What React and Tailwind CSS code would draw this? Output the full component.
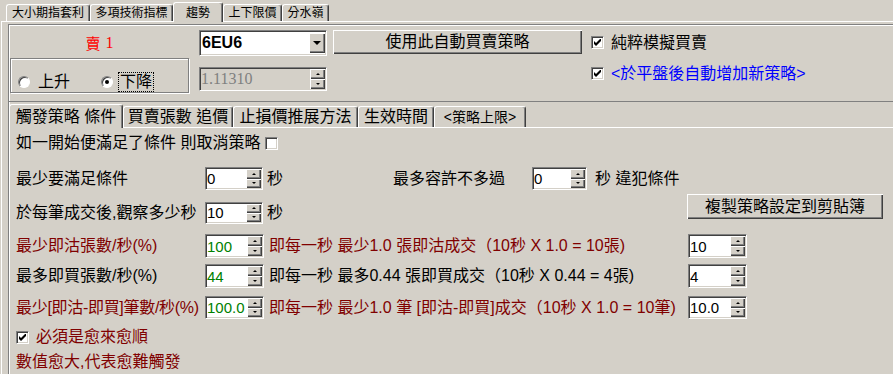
const raised = "bg-[#d4d0c8] shadow-[inset_1px_1px_0_#ffffff,inset_-1px_-1px_0_#404040,inset_-2px_-2px_0_#808080]";
const sunken = "border border-[#808080] border-b-white border-r-white shadow-[inset_1px_1px_0_#404040,inset_-1px_-1px_0_#d4d0c8]";

function Check({ checked }) {
  return (
    <span className={`flex h-[13px] w-[13px] shrink-0 items-center justify-center bg-white ${sunken}`}>
      {checked && (
        <svg width="7" height="7" viewBox="0 0 7 7">
          <path d="M0 2L2 4L6 0L7 0L7 2L2 7L0 5Z" fill="black" />
        </svg>
      )}
    </span>
  );
}

function Radio({ on }) {
  return (
    <span className="flex h-[12px] w-[12px] shrink-0 items-center justify-center rounded-full border border-[#808080] border-b-white border-r-white bg-white shadow-[inset_1px_1px_0_#404040]">
      {on && <span className="h-[4px] w-[4px] rounded-full bg-black" />}
    </span>
  );
}

function SpinButtons() {
  return (
    <div className="flex w-[16px] shrink-0 flex-col py-[1px] pr-[1px]">
      <div className={`flex flex-1 items-center justify-center ${raised}`}>
        <span className="h-0 w-0 border-x-[2px] border-b-[2px] border-x-transparent border-b-black" />
      </div>
      <div className={`flex flex-1 items-center justify-center ${raised}`}>
        <span className="h-0 w-0 border-x-[2px] border-t-[2px] border-x-transparent border-t-black" />
      </div>
    </div>
  );
}

function Spin({ value, w, h, color = "text-black", disabled }) {
  return (
    <div className={`flex shrink-0 ${w} ${h} ${sunken} ${disabled ? "bg-[#d4d0c8]" : "bg-white"}`}>
      <div
        className={`flex flex-1 items-center pl-[1px] ${
          disabled ? "font-['Liberation_Serif',serif] text-[16px] text-[#808080]" : `text-[15px] ${color}`
        }`}
      >
        {value}
      </div>
      <SpinButtons />
    </div>
  );
}

function Tab({ children, w, active, tall, short, text = "text-[12px]" }) {
  return (
    <div
      className={`flex shrink-0 items-center justify-center rounded-t-[3px] border-l border-t border-r border-white border-r-[#404040] shadow-[inset_-1px_0_0_#808080] ${w} ${text} ${
        active ? `${tall} relative z-10 -mb-px bg-[#d4d0c8]` : short
      }`}
    >
      {children}
    </div>
  );
}

export default function App() {
  return (
    <div className="flex h-[374px] w-[893px] flex-col overflow-hidden bg-[#d4d0c8] font-['Liberation_Sans','Noto_Sans_CJK_TC',sans-serif] leading-none text-black">
      {/* top tabs */}
      <div className="flex h-[21px] items-end pl-[6px]">
        <Tab w="w-[84px]" short="h-[17px]">大小期指套利</Tab>
        <Tab w="w-[83px]" short="h-[17px]">多項技術指標</Tab>
        <Tab w="w-[50px]" active tall="h-[20px]">趨勢</Tab>
        <Tab w="w-[59px]" short="h-[17px]">上下限價</Tab>
        <Tab w="w-[47px]" short="h-[17px]">分水嶺</Tab>
      </div>

      <div className="ml-[1px] flex flex-1 flex-col border-l border-t border-white">
        <div className="ml-[6px] mt-[2px] flex flex-1 flex-col border-l border-t border-[#808080] shadow-[inset_1px_1px_0_#ffffff]">
          {/* upper section */}
          <div className="flex h-[77px] shrink-0 border-b border-[#808080] pl-[1px] pt-[5px]">
            <div className="flex w-[179px] shrink-0 flex-col">
              <div className="flex h-[26px] items-center justify-center gap-[5px] text-[15px] text-[#ff0000]">
                <span>賣</span>
                <span className="font-['Liberation_Serif',serif] text-[16px]">1</span>
              </div>
              <div className="mt-[2px] flex h-[35px] items-center border border-[#808080] pl-[7px] pt-[12px] text-[16px] shadow-[inset_1px_1px_0_#ffffff,1px_1px_0_#ffffff]">
                <div className="flex w-[83px] items-center">
                  <Radio />
                  <span className="ml-[8px]">上升</span>
                </div>
                <div className="flex items-center">
                  <Radio on />
                  <span className="ml-[5px] border border-dotted border-black px-[1px] py-[1px]">下降</span>
                </div>
              </div>
            </div>

            <div className="ml-[10px] flex w-[128px] shrink-0 flex-col">
              <div className={`flex h-[26px] bg-white ${sunken}`}>
                <div className="flex flex-1 items-center pl-[2px] text-[16px] font-bold">6EU6</div>
                <div className={`my-[2px] mr-[1px] flex w-[16px] items-center justify-center ${raised}`}>
                  <span className="h-0 w-0 border-x-[4px] border-t-[4px] border-x-transparent border-t-black" />
                </div>
              </div>
              <div className="mt-[11px]">
                <Spin value="1.11310" w="w-[128px]" h="h-[24px]" disabled />
              </div>
            </div>

            <div className={`ml-[6px] flex h-[24px] w-[249px] shrink-0 items-center justify-center text-[16px] ${raised}`}>
              使用此自動買賣策略
            </div>

            <div className="ml-[9px] flex flex-col text-[16px]">
              <div className="mt-[6px] flex h-[13px] items-center">
                <Check checked />
                <span className="ml-[7px]">純粹模擬買賣</span>
              </div>
              <div className="mt-[18px] flex h-[13px] items-center">
                <Check checked />
                <span className="ml-[7px] text-[#0000ff]">&lt;於平盤後自動增加新策略&gt;</span>
              </div>
            </div>
          </div>

          {/* lower tabs */}
          <div className="flex h-[25px] shrink-0 items-end">
            <Tab w="w-[114px]" active tall="h-[24px]" text="text-[16px]">觸發策略 條件</Tab>
            <Tab w="w-[110px]" short="h-[21px]" text="text-[16px]">買賣張數 追價</Tab>
            <Tab w="w-[125px]" short="h-[21px]" text="text-[16px]">止損價推展方法</Tab>
            <Tab w="w-[76px]" short="h-[21px]" text="text-[16px]">生效時間</Tab>
            <Tab w="w-[92px]" short="h-[21px]" text="text-[14px]">&lt;策略上限&gt;</Tab>
          </div>

          <div className="flex flex-1 flex-col border-t border-white pl-[7px] text-[16px]">
            <div className="mt-[6px] flex h-[18px] items-center">
              <span>如一開始便滿足了條件 則取消策略</span>
              <span className="ml-[5px]">
                <Check />
              </span>
            </div>

            <div className="mt-[15px] flex h-[23px] items-center">
              <span className="w-[189px] shrink-0">最少要滿足條件</span>
              <Spin value="0" w="w-[58px]" h="h-[23px]" />
              <span className="ml-[4px] w-[16px] shrink-0">秒</span>
              <span className="ml-[110px] w-[139px] shrink-0">最多容許不多過</span>
              <Spin value="0" w="w-[55px]" h="h-[23px]" />
              <span className="ml-[8px]">秒 違犯條件</span>
            </div>

            <div className="mt-[4px] flex h-[30px] items-start">
              <div className="mt-[7px] flex h-[23px] items-center">
                <span className="w-[189px] shrink-0">於每筆成交後,觀察多少秒</span>
                <Spin value="10" w="w-[58px]" h="h-[22px]" />
                <span className="ml-[4px]">秒</span>
              </div>
              <div className={`ml-auto mr-[10px] flex h-[25px] w-[196px] items-center justify-center ${raised}`}>
                複製策略設定到剪貼簿
              </div>
            </div>

            <div className="mt-[10px] flex h-[24px] items-center text-[#800000]">
              <span className="w-[189px] shrink-0">最少即沽張數/秒(%)</span>
              <Spin value="100" w="w-[59px]" h="h-[24px]" color="text-[#008000]" />
              <span className="ml-[5px] w-[419px] shrink-0">即每一秒 最少1.0 張即沽成交（10秒 X 1.0 = 10張)</span>
              <Spin value="10" w="w-[59px]" h="h-[24px]" />
            </div>

            <div className="mt-[6px] flex h-[24px] items-center">
              <span className="w-[189px] shrink-0">最多即買張數/秒(%)</span>
              <Spin value="44" w="w-[59px]" h="h-[24px]" color="text-[#008000]" />
              <span className="ml-[5px] w-[419px] shrink-0">即每一秒 最多0.44 張即買成交（10秒 X 0.44 = 4張)</span>
              <Spin value="4" w="w-[59px]" h="h-[24px]" />
            </div>

            <div className="mt-[8px] flex h-[23px] items-center text-[#800000]">
              <span className="w-[189px] shrink-0 tracking-[-0.3px]">最少[即沽-即買]筆數/秒(%)</span>
              <Spin value="100.0" w="w-[59px]" h="h-[23px]" color="text-[#008000]" />
              <span className="ml-[5px] w-[419px] shrink-0">即每一秒 最少1.0 筆 [即沽-即買]成交（10秒 X 1.0 = 10筆)</span>
              <Spin value="10.0" w="w-[59px]" h="h-[23px]" />
            </div>

            <div className="mt-[9px] flex h-[18px] items-center text-[#800000]">
              <Check checked />
              <span className="ml-[7px]">必須是愈來愈順</span>
            </div>

            <div className="mt-[7px] flex h-[18px] items-center text-[#800000]">數值愈大,代表愈難觸發</div>
          </div>
        </div>
      </div>
    </div>
  );
}
